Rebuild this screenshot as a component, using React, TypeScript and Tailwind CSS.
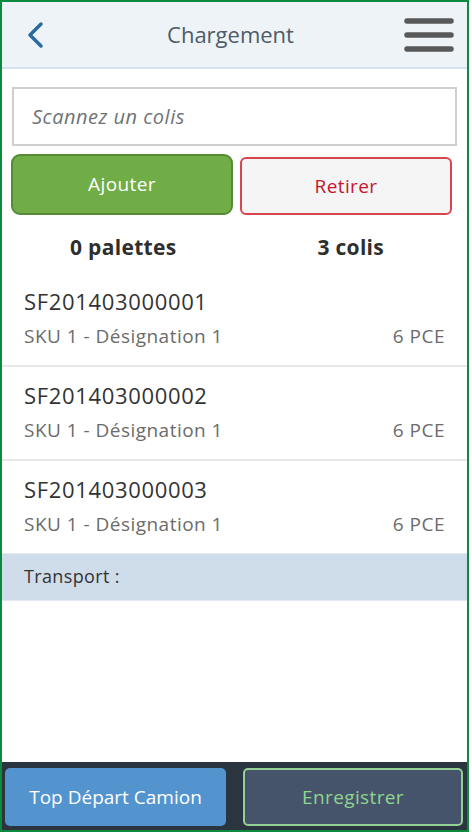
const ITEMS = [
  { code: 'SF201403000001', label: 'SKU 1 - Désignation 1', qty: '6 PCE' },
  { code: 'SF201403000002', label: 'SKU 1 - Désignation 1', qty: '6 PCE' },
  { code: 'SF201403000003', label: 'SKU 1 - Désignation 1', qty: '6 PCE' },
];

export default function App() {
  return (
    <div className="w-[472px] h-[833px] bg-white" style={{ fontFamily: '"Open Sans", "Noto Sans", sans-serif' }}>
      <div className="w-[469px] h-[832px] border-2 border-[#0e8a3e] flex flex-col">
        {/* header */}
        <header className="h-[67px] bg-[#eef3f8] border-b-2 border-[#d6e2ef] flex items-center justify-between pl-[22px] pr-[12px]">
          <svg width="24" height="30" viewBox="0 0 24 30" fill="none">
            <path d="M17 4 L6 15 L17 26" stroke="#2b6a9e" strokeWidth="3.5" strokeLinecap="round" strokeLinejoin="round" />
          </svg>
          <h1 className="text-[22px] text-[#4f5b66] ml-[10px]">Chargement</h1>
          <svg width="52" height="38" viewBox="0 0 52 38" fill="none">
            <path d="M4 5 H48 M4 19 H48 M4 33 H48" stroke="#585858" strokeWidth="5.5" strokeLinecap="round" />
          </svg>
        </header>

        {/* scan */}
        <div className="px-[10px] pt-[18px]">
          <input
            placeholder="Scannez un colis"
            className="w-full h-[59px] border-2 border-[#cfcfcf] px-[18px] text-[20px] tracking-[0.025em] italic text-[#333] placeholder:text-[#6f7378] outline-none"
          />
        </div>

        <div className="flex gap-[7px] px-[9px] pt-[8px]">
          <button className="w-[222px] h-[61px] rounded-[9px] bg-[#70ad47] border-2 border-[#578a36] text-white text-[19px] tracking-[0.02em]">
            Ajouter
          </button>
          <button className="w-[212px] h-[58px] mt-[3px] rounded-[6px] bg-[#f5f5f5] border-2 border-[#d9454c] text-[#c5162d] text-[19px] tracking-[0.02em]">
            Retirer
          </button>
        </div>

        <div className="flex pt-[17px] pb-[9px] text-[21px] tracking-[0.015em] font-bold text-[#2e2e2e]">
          <div className="w-1/2 text-center pl-[10px]">0 palettes</div>
          <div className="w-1/2 text-center">3 colis</div>
        </div>

        {/* list */}
        <ul>
          {ITEMS.map((it, i) => (
            <li
              key={it.code}
              className={`px-[22px] pt-[13px] ${i < ITEMS.length - 1 ? 'h-[94px] border-b-2 border-[#e8e8e8]' : 'h-[92px]'}`}
            >
              <div className="text-[22px] tracking-[0.03em] text-[#333] leading-[30px]">{it.code}</div>
              <div className="flex justify-between text-[19px] tracking-[0.025em] text-[#6b6b6b] mt-[6px]">
                <span>{it.label}</span>
                <span>{it.qty}</span>
              </div>
            </li>
          ))}
        </ul>

        <div className="h-[48px] bg-[#cfdcea] border-y border-[#e4eaf2] flex items-center px-[22px] text-[18px] tracking-[0.02em] text-[#333]">
          Transport :
        </div>

        <div className="flex-1" />

        {/* footer */}
        <footer className="h-[68px] bg-[#2b3540] flex items-center gap-[17px] px-[3px] pt-[2px]">
          <button className="w-[221px] h-[58px] rounded-[5px] bg-[#5394cf] text-white text-[19px]">Top Départ Camion</button>
          <button className="w-[220px] h-[58px] rounded-[5px] bg-[#45546a] border-2 border-[#94cf95] text-[#8fd48f] text-[19px] tracking-[0.02em]">Enregistrer</button>
        </footer>
      </div>
    </div>
  );
}
